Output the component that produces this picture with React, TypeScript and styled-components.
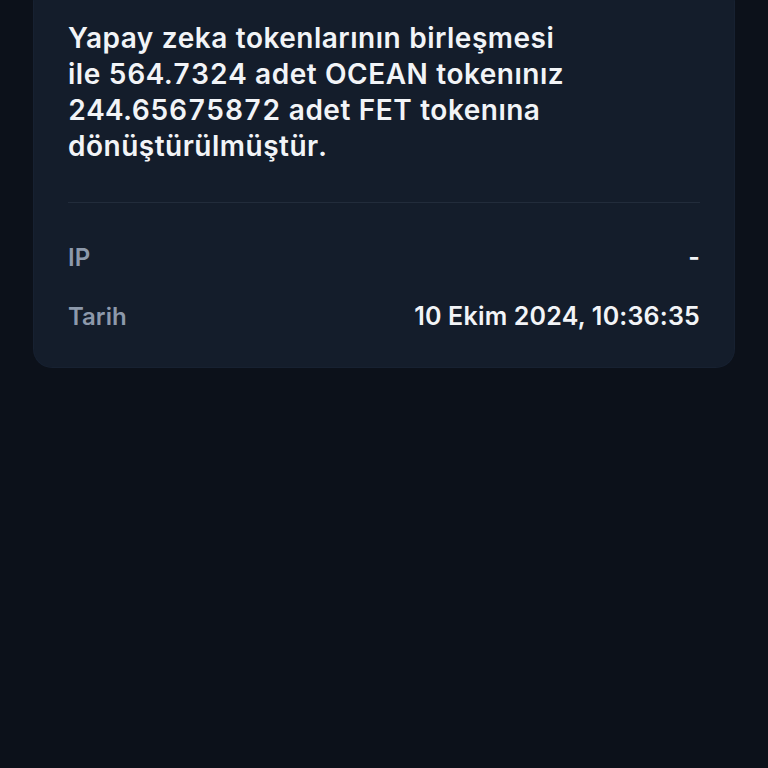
import React from "react";
import styled, { createGlobalStyle } from "styled-components";

const Global = createGlobalStyle`
  html, body { margin: 0; padding: 0; background: #0c111a; }
  body { font-family: Inter, "Noto Sans", "Liberation Sans", sans-serif; -webkit-font-smoothing: antialiased; }
`;

const Page = styled.div`
  min-height: 768px;
  background: #0c111a;
  padding: 0 34px;
  overflow: hidden;
`;

const Card = styled.section`
  margin-top: -16px;
  background: #141d2b;
  border-radius: 18px;
  padding: 36px 34px 35px;
  box-shadow: 0 0 0 1px #172131;
`;

const Message = styled.p`
  margin: 0;
  color: #f2f4f7;
  font-size: 28px;
  line-height: 36px;
  font-weight: 600;
  letter-spacing: 0.5px;
  font-feature-settings: "tnum";
`;

const Divider = styled.hr`
  border: none;
  height: 1px;
  background: #222c3b;
  margin: 38px 0 38px;
`;

const Rows = styled.div`
  display: flex;
  flex-direction: column;
  gap: 27px;
`;

const Row = styled.div`
  display: flex;
  justify-content: space-between;
  align-items: center;
  height: 32px;
  font-weight: 600;
`;

const Label = styled.span`
  color: #8d99ab;
  font-size: 24px;
`;

const Value = styled.span`
  color: #f2f4f7;
  font-size: 25px;
  letter-spacing: 0.2px;
`;

export default function App() {
  return (
    <Page>
      <Global />
      <Card>
        <Message>
          Yapay zeka tokenlarının birleşmesi
          <br />
          ile 564.7324 adet OCEAN tokenınız
          <br />
          244.65675872 adet FET tokenına
          <br />
          dönüştürülmüştür.
        </Message>
        <Divider />
        <Rows>
          <Row>
            <Label>IP</Label>
            <Value>-</Value>
          </Row>
          <Row>
            <Label>Tarih</Label>
            <Value>10 Ekim 2024, 10:36:35</Value>
          </Row>
        </Rows>
      </Card>
    </Page>
  );
}
